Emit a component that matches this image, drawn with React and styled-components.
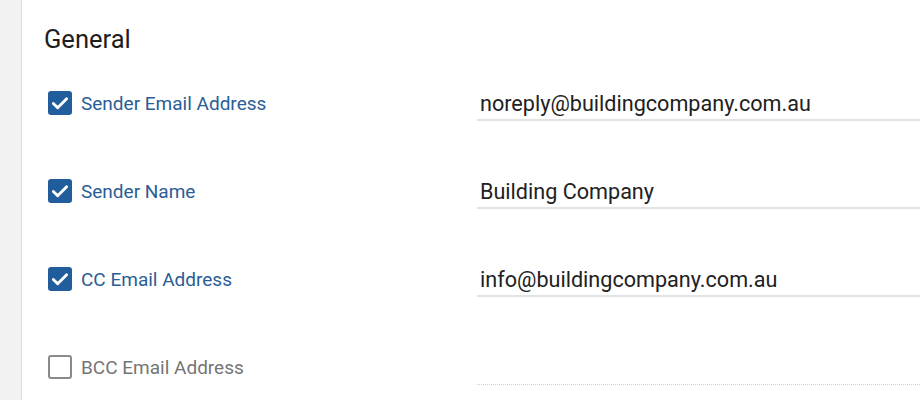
import React from 'react'
import styled, { createGlobalStyle } from 'styled-components'

const GlobalStyle = createGlobalStyle`
  html, body {
    margin: 0;
    padding: 0;
    background: #ffffff;
    font-family: Roboto, "Liberation Sans", Arial, sans-serif;
  }
`

const fields = [
  { label: 'Sender Email Address', value: 'noreply@buildingcompany.com.au', checked: true },
  { label: 'Sender Name', value: 'Building Company', checked: true },
  { label: 'CC Email Address', value: 'info@buildingcompany.com.au', checked: true },
  { label: 'BCC Email Address', value: '', checked: false },
]

const Check = ({ checked }) => (
  <CheckBox $checked={checked}>
    {checked && (
      <svg width="20" height="20" viewBox="0 0 24 24">
        <path d="M4 12.5l5.2 5.2L20 6.8" fill="none" stroke="#fff" strokeWidth="3.4" strokeLinecap="round" strokeLinejoin="round" />
      </svg>
    )}
  </CheckBox>
)

const App = () => {
  return (
    <Page>
      <GlobalStyle />
      <SideRail />
      <Panel>
        <Heading>General</Heading>
        <Rows>
          {fields.map((f) => (
            <Row key={f.label}>
              <LabelCell>
                <Check checked={f.checked} />
                <Label $checked={f.checked}>{f.label}</Label>
              </LabelCell>
              <Field $disabled={!f.checked} defaultValue={f.value} readOnly />
            </Row>
          ))}
        </Rows>
      </Panel>
    </Page>
  )
}

export default App

const Page = styled.div`
  display: flex;
  width: 920px;
  height: 400px;
  overflow: hidden;
`

const SideRail = styled.div`
  flex: 0 0 21px;
  background: #f2f2f2;
  border-right: 1px solid #dcdcdc;
`

const Panel = styled.div`
  flex: 1;
  padding: 24px 0 0 22px;
`

const Heading = styled.h2`
  margin: 0;
  font-size: 25.5px;
  font-weight: 400;
  line-height: 30px;
  color: #1e1e1e;
`

const Rows = styled.div`
  display: flex;
  flex-direction: column;
  margin-top: 5px;
`

const Row = styled.div`
  display: grid;
  grid-template-columns: 433px 1fr;
  align-items: center;
  height: 88px;
`

const LabelCell = styled.div`
  display: flex;
  align-items: center;
  gap: 9px;
  padding-left: 4px;
`

const CheckBox = styled.span`
  display: flex;
  align-items: center;
  justify-content: center;
  box-sizing: border-box;
  width: 24px;
  height: 24px;
  border-radius: 3px;
  background: ${(p) => (p.$checked ? '#215d9b' : '#fff')};
  border: 2px solid ${(p) => (p.$checked ? '#215d9b' : '#8a8a8a')};
`

const Label = styled.span`
  font-size: 19px;
  color: ${(p) => (p.$checked ? '#2a5d96' : '#757575')};
`

const Field = styled.input`
  box-sizing: border-box;
  width: 100%;
  height: 36px;
  padding: 2px 0 0 3px;
  margin-top: 0;
  border: none;
  border-bottom: ${(p) => (p.$disabled ? '1px dotted #cfcfcf' : '2px solid #e3e3e3')};
  font-family: Roboto, "Liberation Sans", Arial, sans-serif;
  font-size: 21.6px;
  color: #212121;
  background: transparent;
  outline: none;
`
